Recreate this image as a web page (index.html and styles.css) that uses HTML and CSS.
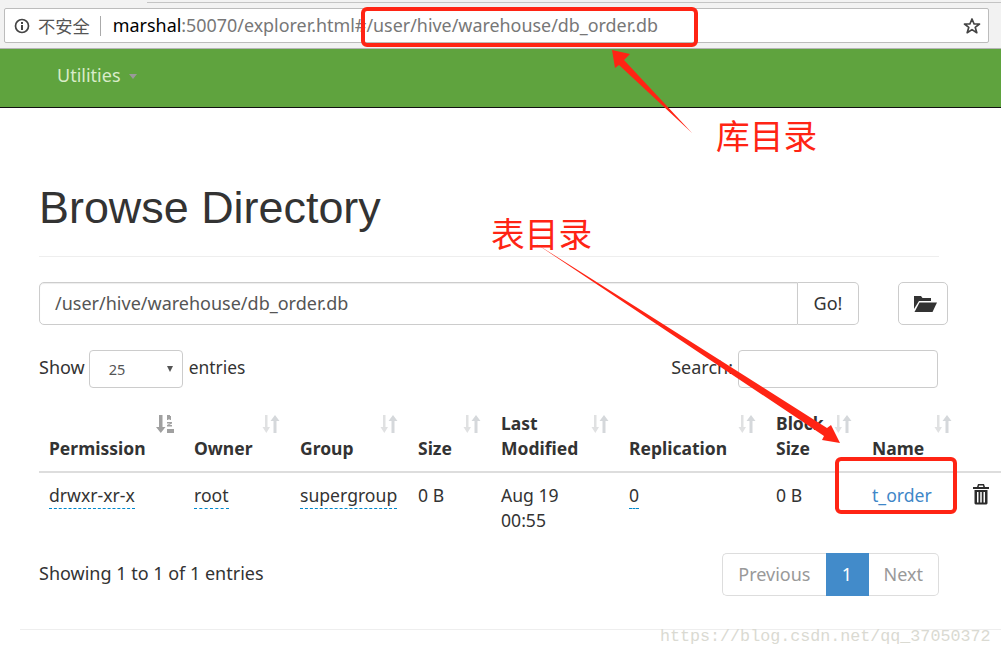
FILE: index.html
```html
<!DOCTYPE html>
<html lang="zh">
<head>
<meta charset="utf-8">
<title>Browse Directory</title>
<link rel="stylesheet" href="styles.css">
</head>
<body>
<svg width="0" height="0" class="defs">
  <symbol id="sort" viewBox="0 0 18 18">
    <path class="s-light" d="M3 0h2.500v12H8l-3.700 6L.5 12H3z"/>
    <path d="M11.500 18V6H8.500L13 0l4.500 6h-3v12z"/>
  </symbol>
  <symbol id="sort-alpha" viewBox="0 0 18 18">
    <path d="M3 0h3.500v12H9.500l-4.700 6L0 12h3z"/>
    <path d="M11 0h3v1h1v4h-1.500V4h-1v1H11zM11 7h5v1.500l-3 1.500h3v1.500h-5V10l3-1.500h-3zM11 14h7v4h-7z"/>
  </symbol>
</svg>
<header class="chrome">
  <div class="tabline"></div>
  <div class="omni">
    <svg class="info" width="16" height="16" viewBox="0 0 16 16"><circle cx="8" cy="8" r="6.500" fill="none" stroke="#444" stroke-width="1.700"/><rect x="7" y="7" width="2" height="5" fill="#444"/><rect x="7" y="4" width="2" height="2" fill="#444"/></svg>
    <span class="insecure">不安全</span>
    <span class="sep"></span>
    <span class="url"><b>marshal</b>:50070/explorer.html#/user/hive/warehouse/db_order.db</span>
    <svg class="star" width="18" height="18" viewBox="0 0 18 18"><path d="M9 2l2.100 5h5.400l-4.300 3.300 1.600 5.400L9 12.600l-4.800 3.100 1.600-5.400L1.500 7h5.400z" fill="none" stroke="#444" stroke-width="1.700" stroke-linejoin="round"/></svg>
  </div>
</header>
<nav class="navbar">
  <span class="nav-item">Utilities</span><span class="caret"></span>
</nav>
<main class="container">
  <h1 class="title">Browse Directory</h1>
  <div class="toolbar">
    <div class="path-group">
      <div class="path-input">/user/hive/warehouse/db_order.db</div>
      <div class="go">Go!</div>
    </div>
    <div class="folder-btn">
      <svg width="24" height="18" viewBox="0 0 24 18"><path d="M1 1h7l1.500 2h8.500v3H6L1 14z" fill="#333"/><path d="M6.500 7.500H24L19.500 17H1.500z" fill="#333"/></svg>
    </div>
  </div>
  <div class="controls">
    <div class="length"><span>Show</span><div class="select"><span>25</span><i class="select-arrow"></i></div><span class="entries">entries</span></div>
    <div class="search"><span>Search:</span><div class="search-input"></div></div>
  </div>
  <table class="files">
    <colgroup>
      <col class="c1"><col class="c2"><col class="c3"><col class="c4"><col class="c5"><col class="c6"><col class="c7"><col class="c8"><col class="c9">
    </colgroup>
    <thead>
      <tr>
        <th>Permission<svg class="si active"><use href="#sort-alpha"/></svg></th>
        <th>Owner<svg class="si"><use href="#sort"/></svg></th>
        <th>Group<svg class="si"><use href="#sort"/></svg></th>
        <th>Size<svg class="si"><use href="#sort"/></svg></th>
        <th>Last Modified<svg class="si"><use href="#sort"/></svg></th>
        <th>Replication<svg class="si"><use href="#sort"/></svg></th>
        <th>Block Size<svg class="si"><use href="#sort"/></svg></th>
        <th>Name<svg class="si"><use href="#sort"/></svg></th>
        <th></th>
      </tr>
    </thead>
    <tbody>
      <tr>
        <td><span class="dotted">drwxr-xr-x</span></td>
        <td><span class="dotted">root</span></td>
        <td><span class="dotted">supergroup</span></td>
        <td>0 B</td>
        <td class="wrap">Aug 19 00:55</td>
        <td><span class="dotted">0</span></td>
        <td>0 B</td>
        <td><a class="link" href="#">t_order</a></td>
        <td><svg class="trash" width="18" height="22" viewBox="0 0 18 22"><path d="M6 1h6l1 3h4v2H1V4h4zM7 2.500L6.700 4h4.600L11 2.500z" fill="#2b2b2b" fill-rule="evenodd"/><path fill-rule="evenodd" d="M2.500 7h13v13.500l-1 1h-11l-1-1zM5 9v10.500h1.500V9zM8.250 9v10.500h1.500V9zM11.500 9v10.500H13V9z" fill="#2b2b2b"/></svg></td>
      </tr>
    </tbody>
  </table>
  <div class="table-foot">
    <span class="showing">Showing 1 to 1 of 1 entries</span>
    <div class="pager"><span class="pg first">Previous</span><span class="pg current">1</span><span class="pg last">Next</span></div>
  </div>
</main>
<footer class="foot"></footer>

<div class="annotations">
  <svg class="arrows" width="1001" height="657" viewBox="0 0 1001 657">
    <path d="M612 50L630 54L624 60L692 133L619 65L615 68z" fill="#ff2414"/>
    <path d="M535 243L827 428L831 425L840 443L822 440L824 436z" fill="#ff2414"/>
  </svg>
  <div class="box box-url"></div>
  <div class="box box-name"></div>
  <span class="note note-db">库目录</span>
  <span class="note note-table">表目录</span>
  <span class="watermark">https://blog.csdn.net/qq_37050372</span>
</div>
</body>
</html>
```
FILE: styles.css
```css
* { box-sizing: border-box; }
html, body { margin: 0; padding: 0; }
body {
  position: relative;
  width: 1001px;
  height: 657px;
  overflow: hidden;
  background: #fff;
  color: #333;
  font-family: "Noto Sans", "Noto Sans CJK SC", sans-serif;
  font-size: 18px;
}
.defs { position: absolute; }

.chrome {
  height: 49px;
  background: #f2f2f2;
  border-bottom: 1px solid #b5b5b5;
  padding-top: 2px;
}
.tabline { height: 1px; margin-left: 147px; background: #c4c4c4; }
.omni {
  display: flex;
  align-items: center;
  margin: 5px 0 0 4px;
  width: 985px;
  height: 35px;
  padding: 0 7px 0 9px;
  background: #fff;
  border: 1px solid #bcbcbc;
  border-radius: 2px;
}
.insecure { margin-left: 8px; font-size: 17.300px; color: #555; }
.sep { width: 1px; height: 20px; margin: 0 12px 0 10px; background: #aaa; }
.url { flex: 1; color: #777; font-size: 17.900px; line-height: 24px; padding-bottom: 1px; white-space: nowrap; }
.url b { font-weight: 400; color: #000; }

.navbar {
  display: flex;
  align-items: center;
  height: 59px;
  padding: 0 0 6px 57px;
  background: #5fa33e;
  border-bottom: 1px solid #111;
}
.nav-item { color: #d9ecc9; font-size: 18px; }
.caret {
  margin: 3px 0 0 8px;
  border-top: 5px solid #9a9a9a;
  border-left: 4.500px solid transparent;
  border-right: 4.500px solid transparent;
}

.container { padding-left: 39px; }
.title {
  margin: 0;
  width: 900px;
  height: 149px;
  padding-top: 75px;
  border-bottom: 1px solid #eee;
  font: 400 44.900px/50px "Liberation Sans", sans-serif;
  color: #333;
}

.toolbar { display: flex; margin-top: 25px; }
.path-group { display: flex; width: 820px; height: 43px; }
.path-input {
  flex: 1;
  padding: 8px 15px;
  border: 1px solid #ccc;
  border-radius: 5px 0 0 5px;
  box-shadow: inset 0 1px 1px rgba(0,0,0,.075);
  color: #555;
  font-size: 18px;
  line-height: 25px;
}
.go {
  width: 61px;
  border: 1px solid #ccc;
  border-left: 0;
  border-radius: 0 5px 5px 0;
  text-align: center;
  line-height: 41px;
}
.folder-btn {
  display: flex;
  align-items: center;
  justify-content: center;
  width: 50px;
  height: 43px;
  margin-left: 39px;
  padding-left: 3px;
  border: 1px solid #ccc;
  border-radius: 5px;
}

.controls {
  display: flex;
  justify-content: space-between;
  width: 899px;
  margin-top: 25px;
  height: 38px;
}
.length, .search { display: flex; align-items: center; }
.search { gap: 5px; }
.length > span, .search > span { padding-bottom: 4px; }
.entries { font-size: 17.400px; }
.select {
  display: flex;
  align-items: center;
  justify-content: space-between;
  width: 94px;
  height: 38px;
  margin: 0 6px 0 4px;
  padding: 0 9px 0 19px;
  border: 1px solid #ccc;
  border-radius: 4px;
  color: #555;
  font-size: 14.500px;
}
.select-arrow {
  border-top: 6px solid #555;
  border-left: 3.500px solid transparent;
  border-right: 3.500px solid transparent;
}
.search-input {
  width: 200px;
  height: 38px;
  border: 1px solid #ccc;
  border-radius: 4px;
}

.files {
  border-collapse: collapse;
  table-layout: fixed;
  width: 1000px;
  margin-top: 18px;
}
.c1 { width: 145px; } .c2 { width: 106px; } .c3 { width: 118px; }
.c4 { width: 83px; } .c5 { width: 128px; } .c6 { width: 147px; }
.c7 { width: 96px; } .c8 { width: 100px; } .c9 { width: 77px; }
.files th {
  position: relative;
  padding: 5px 24px 10px 10px;
  border-bottom: 2px solid #ddd;
  text-align: left;
  vertical-align: bottom;
  font-size: 17.500px;
  line-height: 25px;
  color: #333;
}
.files td {
  padding: 10px;
  vertical-align: top;
  font-size: 17.600px;
  line-height: 25px;
}
.files td.wrap { padding-right: 30px; }
.files tbody td:last-child { padding: 10px 0 0 10px; }
.si {
  position: absolute;
  top: 9px;
  right: 10px;
  width: 18px;
  height: 18px;
  fill: #d5d8db;
}
.si.active { fill: #a0a0a0; }
.s-light { fill: #e0e1e2; }
.dotted { border-bottom: 1px dashed #0088cc; display: inline-block; line-height: 23px; padding-bottom: 1px; }
.link { color: #3f87c8; text-decoration: none; }

.table-foot {
  display: flex;
  justify-content: space-between;
  width: 900px;
  margin-top: 10px;
}
.showing { line-height: 30px; margin-top: 5px; }
.pager { display: flex; height: 43px; }
.pg {
  padding: 0 15px;
  line-height: 41px;
  border: 1px solid #ddd;
  color: #999;
}
.pg.first { border-radius: 5px 0 0 5px; border-right: 0; }
.pg.last { border-radius: 0 5px 5px 0; border-left: 0; }
.pg.current { width: 43px; padding: 0; text-align: center; background: #428bca; border-color: #428bca; color: #fff; }

.foot { margin: 33px 0 0 20px; border-top: 1px solid #eee; }

.annotations { position: absolute; inset: 0; pointer-events: none; }
.arrows { position: absolute; left: 0; top: 0; }
.box { position: absolute; border: 4px solid #ff2414; border-radius: 6px; }
.box-url { left: 361px; top: 7px; width: 337px; height: 40px; }
.box-name { left: 835px; top: 457px; width: 122px; height: 57px; }
.note {
  position: absolute;
  color: #ff2414;
  font-family: "Noto Sans CJK SC", sans-serif;
  font-size: 33.700px;
  line-height: 40px;
}
.note-db { left: 716px; top: 115px; }
.note-table { left: 491px; top: 213px; }
.watermark {
  position: absolute;
  left: 660px;
  top: 627px;
  color: #dadad2;
  font-family: "Liberation Mono", monospace;
  font-size: 16.700px;
  line-height: 20px;
}
```
